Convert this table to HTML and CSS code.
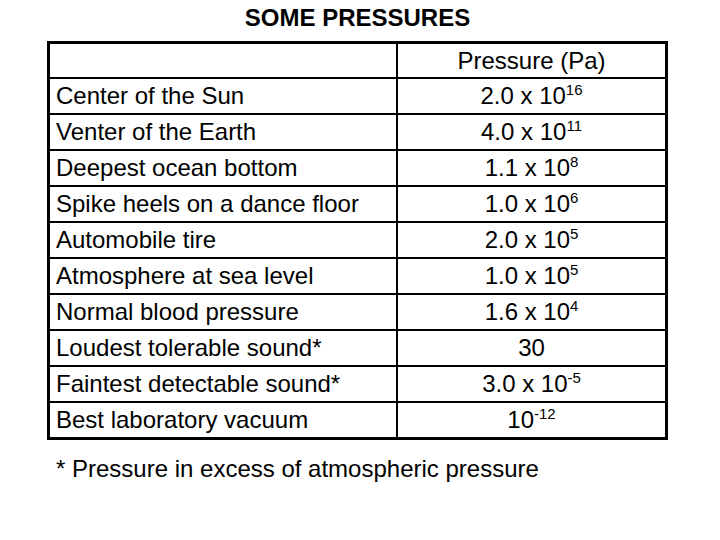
FILE: index.html
```html
<!DOCTYPE html>
<html>
<head>
<meta charset="utf-8">
<link rel="stylesheet" href="styles.css">
</head>
<body>
<div class="page">
  <h1 class="title">SOME PRESSURES</h1>
  <table class="ptable">
    <colgroup><col class="c1"><col class="c2"></colgroup>
    <tr class="head"><td></td><td class="val">Pressure (Pa)</td></tr>
    <tr><td>Center of the Sun</td><td class="val">2.0 x 10<sup>16</sup></td></tr>
    <tr><td>Venter of the Earth</td><td class="val">4.0 x 10<sup>11</sup></td></tr>
    <tr><td>Deepest ocean bottom</td><td class="val">1.1 x 10<sup>8</sup></td></tr>
    <tr><td>Spike heels on a dance floor</td><td class="val">1.0 x 10<sup>6</sup></td></tr>
    <tr><td>Automobile tire</td><td class="val">2.0 x 10<sup>5</sup></td></tr>
    <tr><td>Atmosphere at sea level</td><td class="val">1.0 x 10<sup>5</sup></td></tr>
    <tr><td>Normal blood pressure</td><td class="val">1.6 x 10<sup>4</sup></td></tr>
    <tr><td>Loudest tolerable sound*</td><td class="val">30</td></tr>
    <tr><td>Faintest detectable sound*</td><td class="val">3.0 x 10<sup>-5</sup></td></tr>
    <tr class="last"><td>Best laboratory vacuum</td><td class="val">10<sup>-12</sup></td></tr>
  </table>
  <p class="note">* Pressure in excess of atmospheric pressure</p>
</div>
</body>
</html>
```
FILE: styles.css
```css
html, body {
  margin: 0;
  padding: 0;
  background: #ffffff;
}
.page {
  width: 621px;
  padding-left: 47px;
  font-family: "Liberation Sans", Arial, sans-serif;
  color: #000;
}
.title {
  margin: 0;
  height: 41px;
  line-height: 36px;
  font-size: 24px;
  font-weight: bold;
  text-align: center;
}
.ptable {
  width: 621px;
  table-layout: fixed;
  border-collapse: separate;
  border-spacing: 0;
  border: 3px solid #000;
}
.c1 { width: 348px; }
.ptable td {
  height: 34px;
  padding: 0 0 0 6px;
  font-size: 24px;
  line-height: 28px;
  vertical-align: middle;
  border-bottom: 2px solid #000;
  white-space: nowrap;
}
.ptable td:first-child {
  border-right: 2px solid #000;
}
.ptable tr.last td {
  border-bottom: none;
  height: 34px;
}
.ptable tr.head td {
  height: 33px;
}
.ptable td.val {
  text-align: center;
  padding: 0;
}
sup {
  font-size: 15px;
  line-height: 0;
  vertical-align: 9px;
}
.note {
  margin: 15px 0 0 9px;
  font-size: 24px;
  line-height: 28px;
}
```
